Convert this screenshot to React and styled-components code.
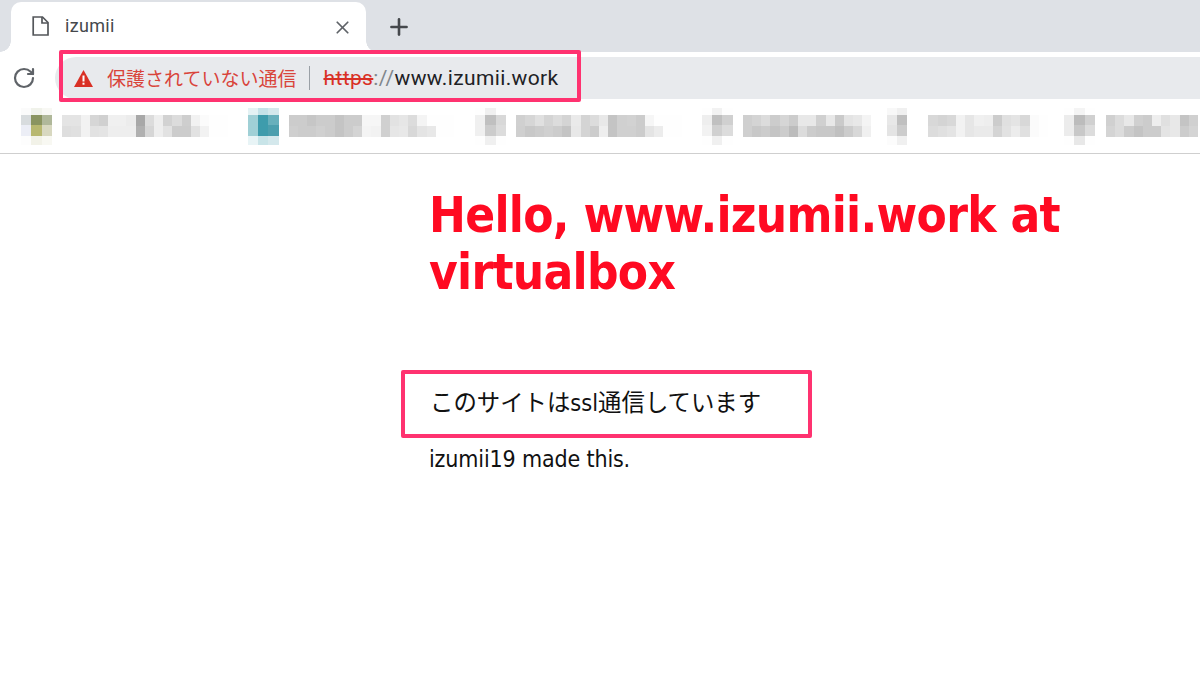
import React from "react";
import styled, { createGlobalStyle } from "styled-components";
import { RotateCw, X, Plus } from "lucide-react";

const Global = createGlobalStyle`
  html, body { margin: 0; padding: 0; background: #fff; }
  body { width: 1200px; height: 690px; overflow: hidden; font-family: "Roboto", "Noto Sans CJK JP", sans-serif; }
`;
const Page = styled.div`position: relative; width: 1200px; height: 690px; display: flex; flex-direction: column; background: #fff;`;
const TabStrip = styled.div`height: 52px; background: #dee1e6; display: flex; align-items: flex-end; padding-left: 11px; box-sizing: border-box;`;
const Tab = styled.div`
  position: relative; width: 355px; height: 50px; background: #fff; border-radius: 10px 10px 0 0;
  display: flex; align-items: center; padding: 0 13px 0 21px; box-sizing: border-box;
  &::before, &::after { content: ""; position: absolute; bottom: 0; width: 11px; height: 11px; }
  &::before { left: -11px; background: radial-gradient(circle at 0 0, #dee1e6 10.5px, #fff 11px); }
  &::after { right: -11px; background: radial-gradient(circle at 100% 0, #dee1e6 10.5px, #fff 11px); }
`;
const PageIcon = styled.svg`width: 17px; height: 20px; flex: none; margin-top: -2px;`;
const TabTitle = styled.span`flex: 1; margin-left: 16px; font: 18px "Roboto", sans-serif; letter-spacing: 0.3px; color: #45484c; margin-top: -3px;`;
const NewTab = styled.div`width: 26px; height: 28px; margin: 0 0 11px 20px; display: flex; align-items: center; justify-content: center; color: #45484c;`;
const Toolbar = styled.div`height: 47px; background: #fff; display: flex; align-items: flex-end; padding-left: 12px; box-sizing: border-box;`;
const Reload = styled.div`width: 24px; height: 24px; margin-bottom: 9px; color: #5f6368; display: flex;`;
const Omnibox = styled.div`
  flex: 1; height: 42px; margin-left: 19px; background: #e8eaed; border-radius: 21px 0 0 21px; display: flex; align-items: center;
  padding-left: 19px; font-size: 21px; letter-spacing: 0.38px; line-height: 42px;
`;
const Warn = styled.svg`width: 19px; height: 17px; flex: none;`;
const Insecure = styled.span`margin-left: 14px; color: #d9443a; font-size: 19px; font-family: "Noto Sans CJK JP", sans-serif; letter-spacing: 0;`;
const Sep = styled.i`width: 1px; height: 24px; background: #9aa0a6; margin: 0 13px;`;
const Scheme = styled.s`color: #d93025;`;
const Slashes = styled.span`color: #80868b;`;
const Host = styled.span`color: #202124;`;
const Bookmarks = styled.div`
  height: 55px; box-sizing: border-box; border-bottom: 1px solid #cfcfcf; overflow: hidden; background: #fff;
  display: flex; padding-left: 21px; padding-top: 9px;
`;
const Mosaic = styled.div`
  display: grid; grid-auto-flow: column; flex: none; filter: blur(0.6px);
  grid-template-rows: ${p => p.$icon ? "7px 10px 11px 9px" : "11px 11px"};
  grid-auto-columns: ${p => p.$cell}px;
  margin-left: ${p => p.$gap}px;
  margin-top: ${p => p.$icon ? 0 : 7}px;
  height: fit-content;
`;
const Cell = styled.span.attrs(p => ({ style: { background: p.$c } }))``;
const Main = styled.main`flex: 1; padding: 33px 0 0 429px; box-sizing: border-box;`;
const Heading = styled.h1`margin: 0; width: 700px; color: #ff0a22; font: 700 49px/57px "DejaVu Sans", sans-serif; font-stretch: condensed; letter-spacing: -0.7px;`;
const Callout = styled.div`
  width: 411px; height: 68px; margin: 69px 0 0 -28px; box-sizing: border-box; border: 4px solid #ff3270; border-radius: 2px;
  padding-left: 25px; display: flex; align-items: center; font: 23.4px "DejaVu Sans", "Noto Sans CJK JP", sans-serif; font-stretch: condensed; color: #111; padding-bottom: 6px;
`;
const Credit = styled.p`margin: 3px 0 0; font: 23px/36px "DejaVu Sans", sans-serif; font-stretch: condensed; color: #111; letter-spacing: -0.15px;`;
const Highlight = styled.div`position: absolute; left: 59px; top: 50px; width: 522px; height: 52px; box-sizing: border-box; border: 4px solid #ff3270; border-radius: 2px;`;

const g = v => `#${v}${v}${v}`;
const text = (a, b) => a.map((v, i) => [g(v), g(b[i])]);
const shade = (top, mid, low, end, side) => [[g(side[0]), g(side[1]), g(side[2]), g(side[3])], [g(top), g(mid), g(low), g(end)], [g(side[0]), g(side[4]), g(side[5]), g(side[3])]];
const blocks = [
  { icon: true, gap: 0, cols: [["#fbfbfb","#d8dcde","#eceef6","#fdfdfd"],["#f0f2ea","#8a9460","#b8b870","#f2f2e8"],["#f8f8f4","#b0b89a","#d8d8c0","#f8f8f2"]] },
  { gap: 10, cols: text(["e4","e4","f2","d6","d0","f0","f0","ec","a8","dc","ee","d2","dc","ce","f2","fb","fe","fe"],["de","e0","f2","e2","e4","ee","ee","ee","b0","d6","ee","e2","cc","cc","e2","f2","fe","fe"]) },
  { icon: true, gap: 20, cols: [["#e4f2f4","#a0d0d6","#a0d0d6","#e8f4f6"],["#c4e2e8","#3e9cac","#3e9cac","#c8e4e8"],["#d4e8ec","#68b0bc","#4c9fae","#d4e8ec"]] },
  { gap: 10, cols: text(["cc","cc","c6","cc","cc","c4","cc","cc","f6","f6","d0","e2","e6","dc","f4","fe","fe","fe"],["cf","cc","cc","d0","cc","c4","cc","d4","f4","f2","d0","e6","e8","d8","e4","e8","fe","fe"]) },
  { icon: true, gap: 21, cols: shade("f0", "c0", "cc", "f0", ["fe", "f0", "f0", "fe", "d8", "dc"]) },
  { gap: 10, cols: text(["d0","d6","e0","d4","dc","d4","ea","d4","dc","e8","c4","d0","d2","cc","f6","fe","fe","fe"],["cf","c8","cc","d0","cc","c4","e8","d4","cc","ee","c4","d0","d0","cc","e4","ec","fe","fe"]) },
  { icon: true, gap: 20, cols: shade("f2", "c0", "d0", "f0", ["fe", "ee", "f2", "fe", "d0", "dc"]) },
  { gap: 10, cols: text(["cf","d4","dc","cc","d6","cc","e8","e8","d0","e8","ca","e4","e8","f4"],["cf","c8","cc","c4","cc","bc","dc","cc","c8","c8","c0","cc","d8","f0"]) },
  { icon2: true, icon: true, gap: 16, cols: [["#f8f8f8","#e8e8e8","#e4e4e4","#fcfcfc"],["#f0f0f0","#c0c0c0","#cccccc","#f0f0f0"]] },
  { gap: 21, cols: text(["d8","d4","d8","f2","e6","f0","ee","cc","e0","e4","d8","fb","fe"],["dc","e0","e4","f2","e6","ea","ea","d4","e2","ec","e0","fb","fe"]) },
  { icon: true, gap: 16, cols: shade("f4", "bc", "c8", "e8", ["fe", "ec", "ec", "fe", "d0", "dc"]) },
  { gap: 11, cols: text(["d0","dc","e8","d0","cc","ee","e0","e8","c4","d0"],["d4","dc","cc","c4","cc","cc","e4","e8","cc","d4"]) },
];

const Block = ({ b }) => (
  <Mosaic $icon={b.icon} $cell={b.icon ? (b.icon2 ? 10 : 10.4) : 9.2} $gap={b.gap}>
    {b.cols.flat().map((c, i) => <Cell key={i} $c={c} />)}
  </Mosaic>
);

export default function App() {
  return (
    <Page>
      <Global />
      <TabStrip>
        <Tab>
          <PageIcon viewBox="0 0 17 20" fill="none" stroke="#54575b" strokeWidth="1.7" strokeLinejoin="miter">
            <path d="M1.2 1H10.5L16 6.5V19H1.2Z" />
            <path d="M10 1V7H16" />
          </PageIcon>
          <TabTitle>izumii</TabTitle>
          <X size={21} strokeWidth={2} color="#5f6368" />
        </Tab>
        <NewTab><Plus size={26} strokeWidth={2.4} /></NewTab>
      </TabStrip>
      <Toolbar>
        <Reload><RotateCw size={24} strokeWidth={2.2} /></Reload>
        <Omnibox>
          <Warn viewBox="0 0 19 17"><path d="M9.5 0 19 17H0Z" fill="#d93025" /><rect x="8.5" y="5.5" width="2" height="6" fill="#fff" /><rect x="8.5" y="12.7" width="2" height="2" fill="#fff" /></Warn>
          <Insecure>保護されていない通信</Insecure>
          <Sep />
          <span><Scheme>https</Scheme><Slashes>://</Slashes><Host>www.izumii.work</Host></span>
        </Omnibox>
      </Toolbar>
      <Bookmarks>
        {blocks.map((b, i) => <Block key={i} b={b} />)}
      </Bookmarks>
      <Main>
        <Heading>Hello, www.izumii.work at virtualbox</Heading>
        <Callout>このサイトはssl通信しています</Callout>
        <Credit>izumii19 made this.</Credit>
      </Main>
      <Highlight />
    </Page>
  );
}
